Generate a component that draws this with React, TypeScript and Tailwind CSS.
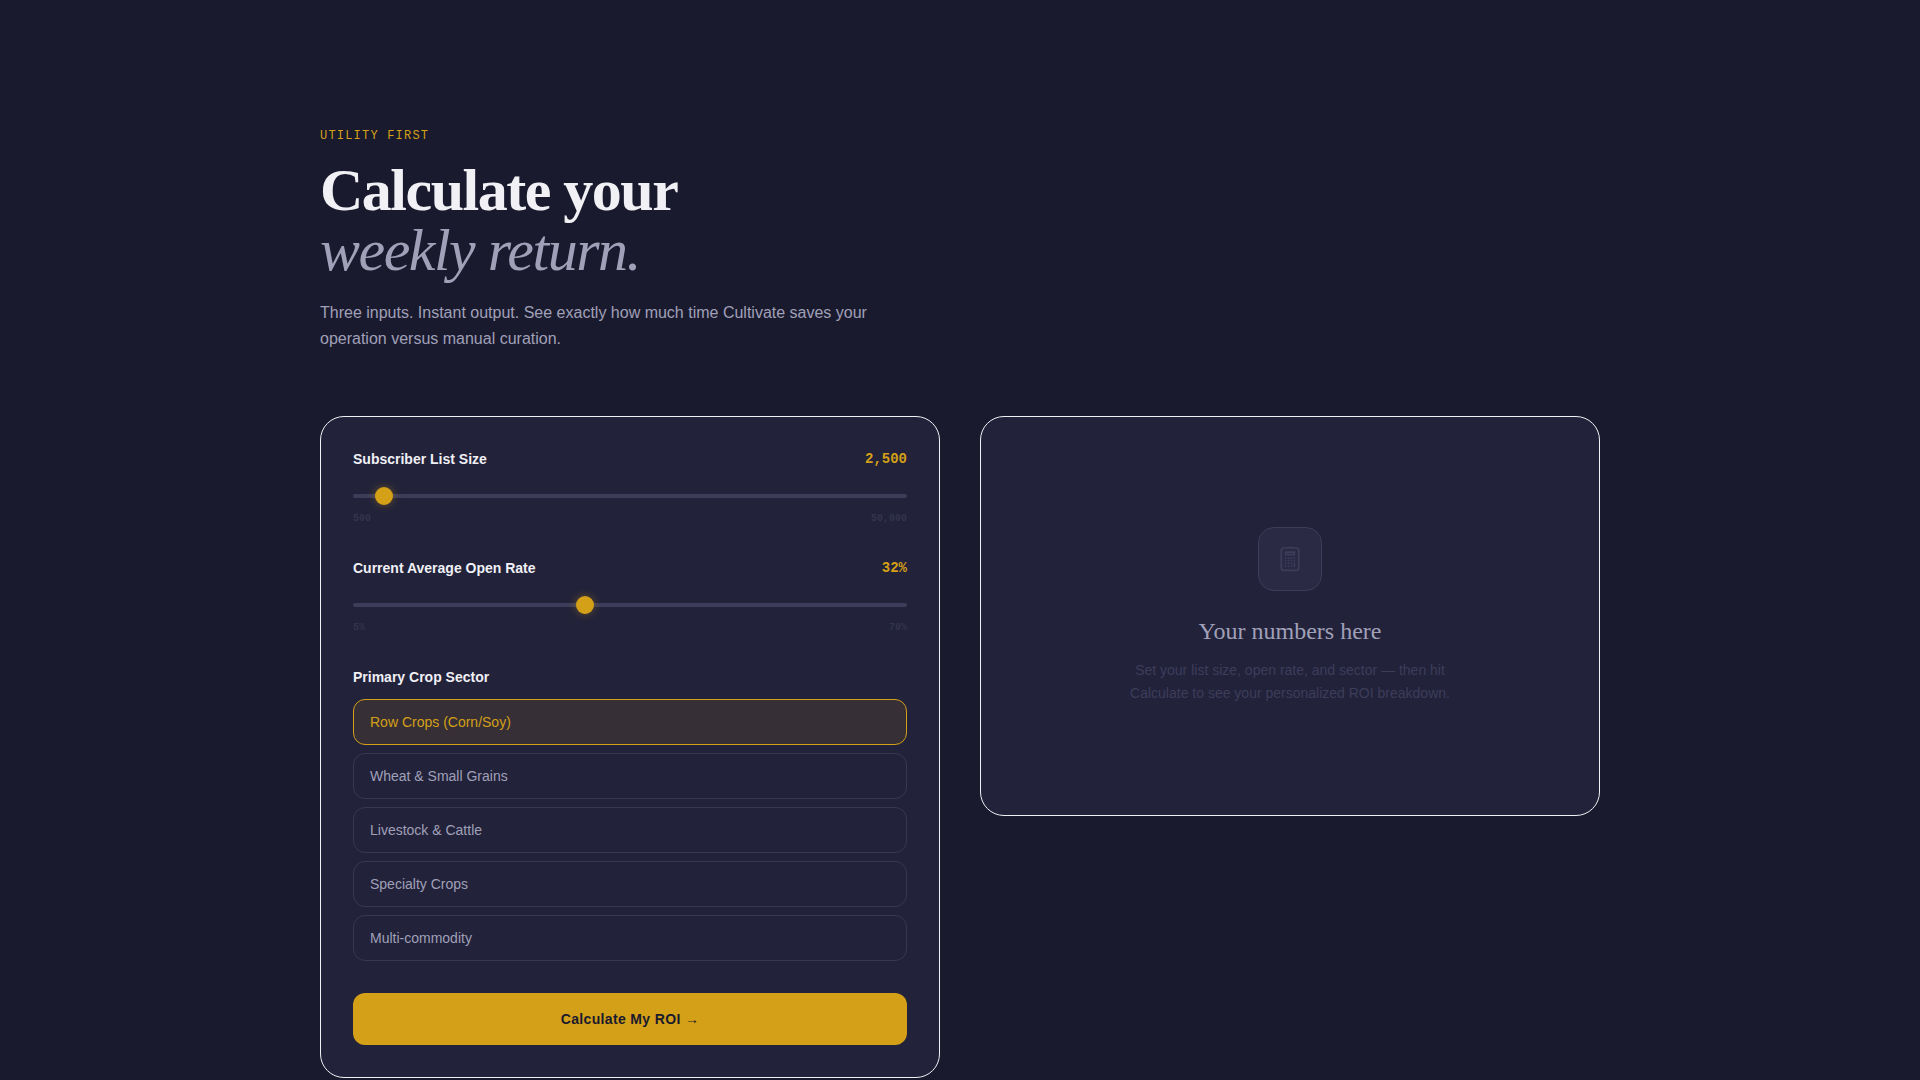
import { useState } from "react";
import { HiOutlineCalculator } from "react-icons/hi2";

const sectors = [
  "Row Crops (Corn/Soy)",
  "Wheat & Small Grains",
  "Livestock & Cattle",
  "Specialty Crops",
  "Multi-commodity",
];

const sliderClass =
  "block w-full h-1 cursor-pointer appearance-none rounded-full bg-[#3d3d5a] outline-none [&::-webkit-slider-thumb]:h-[18px] [&::-webkit-slider-thumb]:w-[18px] [&::-webkit-slider-thumb]:appearance-none [&::-webkit-slider-thumb]:rounded-full [&::-webkit-slider-thumb]:bg-[#d4a017] [&::-webkit-slider-thumb]:shadow-[0_0_8px_rgba(212,160,23,0.4)]";

type SliderFieldProps = {
  id: string;
  label: string;
  display: string;
  min: number;
  max: number;
  step: number;
  value: number;
  minLabel: string;
  maxLabel: string;
  onChange: (value: number) => void;
};

function SliderField({ id, label, display, min, max, step, value, minLabel, maxLabel, onChange }: SliderFieldProps) {
  return (
    <div>
      <div className="mb-6 flex items-center justify-between text-sm leading-[21px]">
        <label htmlFor={id} className="font-semibold">
          {label}
        </label>
        <span className="font-['Liberation_Mono',monospace] font-bold text-[#d4a017]">{display}</span>
      </div>
      <input
        id={id}
        type="range"
        min={min}
        max={max}
        step={step}
        value={value}
        onChange={(e) => onChange(Number(e.target.value))}
        className={sliderClass}
      />
      <div className="mt-[13px] flex justify-between font-['Liberation_Mono',monospace] text-[10px] leading-[15px] font-bold text-[#34344e]">
        <span>{minLabel}</span>
        <span>{maxLabel}</span>
      </div>
    </div>
  );
}

export default function App() {
  const [listSize, setListSize] = useState(2500);
  const [openRate, setOpenRate] = useState(32);
  const [sector, setSector] = useState(sectors[0]);

  return (
    <main className="min-h-screen bg-[#1a1a2e] px-6 pt-32 font-['Liberation_Sans',Arial,sans-serif] text-[#f0f0f5]">
      <div className="mx-auto max-w-7xl">
        {/* Header */}
        <header className="mb-16">
          <p className="mb-4 font-['Liberation_Mono',monospace] text-xs tracking-widest text-[#d4a017] uppercase">
            Utility first
          </p>
          <h1 className="mb-5 font-['Liberation_Serif',serif] text-6xl leading-none font-bold tracking-tight">
            Calculate your
            <br />
            <em className="font-normal text-[#a0a0b8]">weekly return.</em>
          </h1>
          <p className="max-w-xl text-base leading-[26px] text-[#a0a0b8]">
            Three inputs. Instant output. See exactly how much time Cultivate saves your operation versus manual
            curation.
          </p>
        </header>

        <div className="grid grid-cols-1 items-start gap-10 lg:grid-cols-2">
          {/* Inputs */}
          <form
            onSubmit={(e) => e.preventDefault()}
            className="flex flex-col gap-8 rounded-3xl border border-[#f0f0f5] bg-[#22223a] p-8"
          >
            <SliderField
              id="list-size"
              label="Subscriber List Size"
              display={listSize.toLocaleString("en-US")}
              min={500}
              max={50000}
              step={100}
              value={listSize}
              minLabel="500"
              maxLabel="50,000"
              onChange={setListSize}
            />
            <SliderField
              id="open-rate"
              label="Current Average Open Rate"
              display={`${openRate}%`}
              min={5}
              max={70}
              step={1}
              value={openRate}
              minLabel="5%"
              maxLabel="70%"
              onChange={setOpenRate}
            />

            <div>
              <p className="mb-3 text-sm leading-5 font-semibold">Primary Crop Sector</p>
              <div className="flex flex-col gap-2">
                {sectors.map((item) => (
                  <button
                    key={item}
                    type="button"
                    aria-pressed={item === sector}
                    onClick={() => setSector(item)}
                    className={`rounded-xl border px-4 py-3 text-left text-sm leading-5 ${
                      item === sector
                        ? "border-[#d4a017] bg-[#372f36] text-[#d4a017]"
                        : "border-[#38384f] text-[#a0a0b8]"
                    }`}
                  >
                    {item}
                  </button>
                ))}
              </div>
            </div>

            <button
              type="submit"
              className="rounded-xl bg-[#d4a017] py-4 text-sm leading-5 font-bold tracking-wide text-[#1a1a2e]"
            >
              Calculate My ROI →
            </button>
          </form>

          {/* Empty result */}
          <section className="flex min-h-[400px] flex-col items-center justify-center rounded-3xl border border-[#f0f0f5] bg-[#22223a] p-8 text-center">
            <div className="mb-6 flex h-16 w-16 items-center justify-center rounded-2xl border border-[#3d3d5a] bg-[#2a2a45] text-[#3d3d5a]">
              <HiOutlineCalculator className="h-7 w-7" aria-hidden="true" />
            </div>
            <h2 className="mb-3 font-['Liberation_Serif',serif] text-2xl text-[#a0a0b8]">Your numbers here</h2>
            <p className="max-w-[320px] text-sm leading-[23px] text-[#3d3d5a]">
              Set your list size, open rate, and sector — then hit Calculate to see your personalized ROI breakdown.
            </p>
          </section>
        </div>
      </div>
    </main>
  );
}
